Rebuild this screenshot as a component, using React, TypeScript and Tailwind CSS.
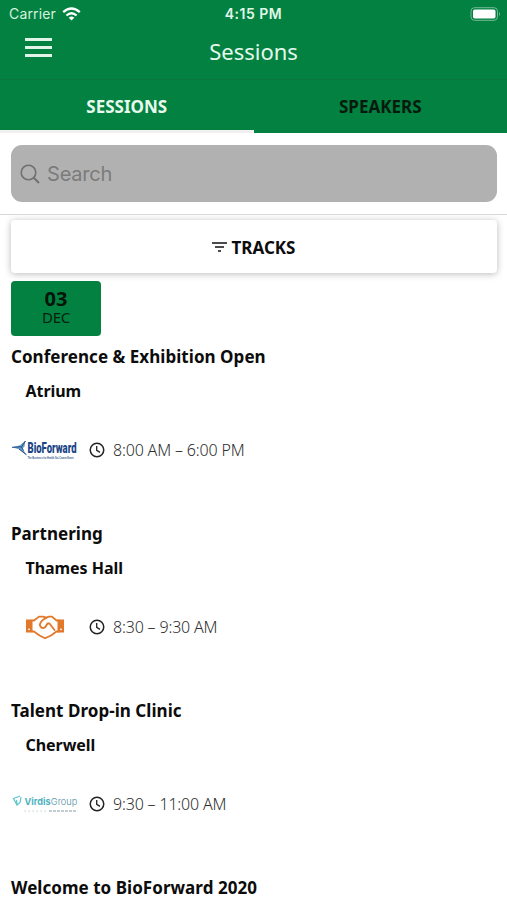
import type { ReactNode } from "react";

function BioForwardLogo() {
  return (
    <svg width="66" height="24" viewBox="0 0 66 24" className="overflow-visible">
      <path d="M0 9.300 L8 7.200 L13.500 2.500 L12.500 8.500 L10.500 10.500 L14.500 17 L7.500 11.500 Z" fill="#6d9cc4" />
      <path d="M0 9.300 L9.500 8.800 L13.500 3 M7 11 L14.500 16.800 M9.500 9 L11.500 12.500" stroke="#1c4c86" strokeWidth="1" fill="none" />
      <text x="15.500" y="15.200" textLength="49" lengthAdjust="spacingAndGlyphs" fontFamily="Roboto, sans-serif" fontSize="15" fontWeight="900" fill="#1c4585">BioForward</text>
      <text x="15.500" y="21" textLength="46" lengthAdjust="spacingAndGlyphs" fontFamily="Liberation Sans, sans-serif" fontSize="3" fontWeight="700" fill="#36588c">The Business for Health Sci-Comm Event</text>
    </svg>
  );
}

function HandshakeLogo() {
  return (
    <svg width="66" height="28" viewBox="0 0 66 28">
      <g fill="none" stroke="#e2782a" strokeWidth="1.800" strokeLinejoin="round" strokeLinecap="round">
        <path d="M20 7.500 H22 L27 3.600 H31 L34 4.600 L37 3.600 H40 L44.500 7.500 H47" />
        <path d="M20 18.500 H22 L27.500 22.500 L33 25.300 L39 22.500 L44.500 18.500 H47" />
        <path d="M34.500 4.800 Q29.500 6.500 27.800 11.500 Q28.500 16 32.500 14.700 Q34 13.500 35.500 10.500 H37.500 L42.500 17" />
      </g>
      <path d="M14 6.500 H20.500 V19.500 H14 Z M45.500 6.500 H52 V19.500 H45.500 Z" fill="#e2782a" />
      <circle cx="17" cy="16.300" r=".9" fill="#fff" />
      <circle cx="49" cy="16.300" r=".9" fill="#fff" />
    </svg>
  );
}

function VirdisLogo() {
  return (
    <svg width="66" height="24" viewBox="0 0 66 24" className="overflow-visible">
      <path d="M8 4 L1.500 6.500 L5 13 L8 10.500 L9 5 M5 13 L4.500 8" fill="none" stroke="#5cc6cc" strokeWidth="1.200" />
      <text x="12.500" y="12.500" textLength="26" lengthAdjust="spacingAndGlyphs" fontFamily="Inter, sans-serif" fontSize="9.500" fontWeight="700" fill="#4db2be">Virdis</text>
      <text x="38.800" y="12.500" textLength="26.500" lengthAdjust="spacingAndGlyphs" fontFamily="Inter, sans-serif" fontSize="9.500" fontWeight="300" fill="#55909f">Group</text>
      <path d="M12.500 19 H36" stroke="#b3c3c9" strokeWidth=".8" strokeDasharray="1.500 2.500" />
      <path d="M37 19 H65" stroke="#7b9099" strokeWidth=".9" strokeDasharray="3 1" />
    </svg>
  );
}

function Clock() {
  return (
    <svg width="16" height="16" viewBox="0 0 16 16" fill="none" stroke="#222" strokeWidth="1.500" className="shrink-0">
      <circle cx="8" cy="8" r="6.750" />
      <path d="M7.700 4 V8.400 L11 10.400" strokeWidth="1.300" />
    </svg>
  );
}

type SessionProps = { title: string; room: string; time: string; logo: ReactNode };

function Session({ title, room, time, logo }: SessionProps) {
  return (
    <article className="h-[177px] shrink-0">
      <h2 className="h-6 pl-[11px] text-[17px] font-bold leading-6 tracking-[0.04px] whitespace-nowrap">{title}</h2>
      <p className="mt-[10px] h-6 pl-[25.5px] text-[16px] font-bold leading-6 tracking-[-0.05px] whitespace-nowrap">{room}</p>
      <div className="mt-[31px] flex h-8 items-center pl-[12px]">
        <div className="flex w-[66px] items-center">{logo}</div>
        <div className="ml-[11px] flex items-center gap-2">
          <Clock />
          <span className="text-[16px] leading-6 font-light tracking-[-0.17px] whitespace-nowrap text-[#303030]">{time}</span>
        </div>
      </div>
    </article>
  );
}

export default function App() {
  return (
    <div className="flex h-[900px] w-[507px] flex-col overflow-hidden bg-white font-['Noto_Sans',sans-serif] text-[#0c0c0c]">
      <header className="h-[79px] shrink-0 bg-[#038141] text-white">
        <div className="grid h-7 grid-cols-3 items-center font-['Inter',sans-serif] leading-7">
          <div className="flex items-center gap-[6px] pl-[9px] text-[#d4f3df]">
            <span className="text-[14px] tracking-[0.15px]">Carrier</span>
            <svg width="19" height="14" viewBox="0 0 19 14" fill="none" stroke="white" strokeWidth="2.300">
              <path d="M1.200 5.200 Q9.500 -2.300 17.800 5.200 M4.400 8.500 Q9.500 4.100 14.600 8.500" />
              <path d="M6.700 10.800 Q9.500 8.300 12.300 10.800 L9.500 13.600 Z" fill="white" stroke="none" />
            </svg>
          </div>
          <div className="text-center text-[14px] font-semibold tracking-[0.5px] text-[#e1f8e9]">4:15 PM</div>
          <div className="flex justify-end pr-[6px]">
            <svg width="31" height="14" viewBox="0 0 31 14">
              <rect x="1" y=".7" width="26.500" height="12.600" rx="3.500" fill="none" stroke="#77b995" />
              <rect x="3" y="2.500" width="22.500" height="9" rx="1.800" fill="white" />
              <path d="M29 5 Q31 7 29 9 Z" fill="#77b995" />
            </svg>
          </div>
        </div>
        <div className="grid h-[51px] grid-cols-[80px_1fr_80px]">
          <button aria-label="Menu" className="ml-[25px] mt-[10px] flex h-[19px] w-[27px] flex-col justify-between">
            <span className="h-[3px] w-full bg-[#e0f5e8]" />
            <span className="h-[3px] w-full bg-[#e0f5e8]" />
            <span className="h-[3px] w-full bg-[#e0f5e8]" />
          </button>
          <h1 className="mt-[7px] text-center text-[22px] leading-8 text-[#e3f9eb]">Sessions</h1>
        </div>
      </header>
      <nav className="grid h-[54px] shrink-0 grid-cols-2 border-t border-[#08763e] bg-[#038141] text-center text-[17px] font-bold">
        <div className="h-[53px] border-b-[3px] border-[#f0f0f0] leading-[53px] text-[#e7faed]">SESSIONS</div>
        <div className="h-[53px] leading-[53px] text-[#061b0e]">SPEAKERS</div>
      </nav>
      <section className="h-[82px] shrink-0 border-b border-[#d8d8d8] pt-[12px] pr-[10px] pl-[11px]">
        <div className="flex h-[57px] items-center rounded-[11px] bg-[#b1b1b1] pl-[9px] text-[#7b7b7b]">
          <svg width="20" height="20" viewBox="0 0 20 20" fill="none" stroke="#707070" strokeWidth="1.600">
            <circle cx="8.500" cy="8.500" r="7.300" />
            <path d="M13.500 13.500 L19 19" strokeWidth="2" />
          </svg>
          <span className="ml-[7px] font-['Inter',sans-serif] text-[20px] leading-8 tracking-[-0.2px]">Search</span>
        </div>
      </section>
      <main className="flex flex-1 flex-col overflow-hidden">
        <button className="mt-[5px] mr-[10px] ml-[11px] flex h-[53px] shrink-0 items-center justify-center gap-[5px] rounded-[4px] bg-white pt-[3px] pr-[1px] text-[17px] font-bold shadow-[0_1px_7px_rgba(0,0,0,0.28)]">
          <svg width="15" height="12" viewBox="0 0 15 12" fill="none" stroke="#111" strokeWidth="1.600" className="mb-[2px]"><path d="M0 2 H15 M3 6 H12 M6 10 H9" /></svg>
          <span>TRACKS</span>
        </button>
        <div className="mt-[8px] ml-[11px] flex h-[55px] w-[90px] shrink-0 flex-col items-center rounded-[4px] bg-[#038141] pt-[7px] text-[#06210f]">
          <strong className="text-[20px] leading-[21px] text-[#04150a]">03</strong>
          <span className="text-[15px] leading-[16px] tracking-[-0.2px]">DEC</span>
        </div>
        <div className="mt-[9px] shrink-0">
          <Session title="Conference & Exhibition Open" room="Atrium" time="8:00 AM – 6:00 PM" logo={<BioForwardLogo />} />
          <Session title="Partnering" room="Thames Hall" time="8:30 – 9:30 AM" logo={<HandshakeLogo />} />
          <Session title="Talent Drop-in Clinic" room="Cherwell" time="9:30 – 11:00 AM" logo={<VirdisLogo />} />
          <h2 className="pl-[11px] text-[17px] font-bold leading-6 tracking-[0.04px]">Welcome to BioForward 2020</h2>
        </div>
      </main>
    </div>
  );
}
